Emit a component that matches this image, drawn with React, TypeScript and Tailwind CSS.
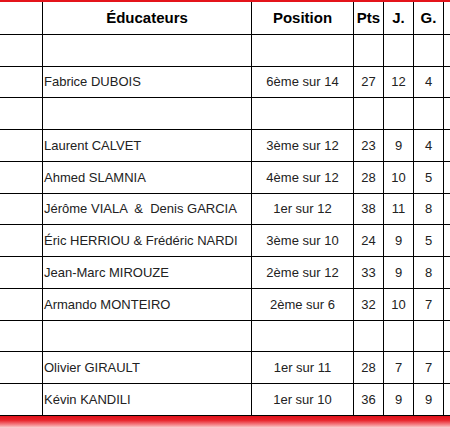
import { FC } from "react";

interface Row {
  name?: string;
  position?: string;
  pts?: string;
  j?: string;
  g?: string;
  h: string;
}

const rows: Row[] = [
  { h: "h-[32px]" },
  { name: "Fabrice DUBOIS", position: "6ème sur 14", pts: "27", j: "12", g: "4", h: "h-[31px]" },
  { h: "h-[32px]" },
  { name: "Laurent CALVET", position: "3ème sur 12", pts: "23", j: "9", g: "4", h: "h-[32px]" },
  { name: "Ahmed SLAMNIA", position: "4ème sur 12", pts: "28", j: "10", g: "5", h: "h-[32px]" },
  { name: "Jérôme VIALA  &  Denis GARCIA", position: "1er sur 12", pts: "38", j: "11", g: "8", h: "h-[31px]" },
  { name: "Éric HERRIOU & Frédéric NARDI", position: "3ème sur 10", pts: "24", j: "9", g: "5", h: "h-[32px]" },
  { name: "Jean-Marc MIROUZE", position: "2ème sur 12", pts: "33", j: "9", g: "8", h: "h-[32px]" },
  { name: "Armando MONTEIRO", position: "2ème sur 6", pts: "32", j: "10", g: "7", h: "h-[32px]" },
  { h: "h-[31px]" },
  { name: "Olivier GIRAULT", position: "1er sur 11", pts: "28", j: "7", g: "7", h: "h-[32px]" },
  { name: "Kévin KANDILI", position: "1er sur 10", pts: "36", j: "9", g: "9", h: "h-[32px]" },
];

const cell = "flex items-center border-r border-black";

const App: FC = () => {
  return (
    <div className="w-[450px] h-[428px] overflow-hidden bg-white font-['Liberation_Sans',Arial,sans-serif] text-[13px] text-[#222]">
      <div className="h-[2px] bg-[#e4141b]" />
      {/* header */}
      <div className="flex h-[33px] border-b border-black text-[15px] font-bold text-black">
        <div className={`${cell} w-[43px] shrink-0`} />
        <div className={`${cell} w-[209px] shrink-0 justify-center`}>Éducateurs</div>
        <div className={`${cell} w-[102px] shrink-0 justify-center`}>Position</div>
        <div className={`${cell} w-[30px] shrink-0 justify-center`}>Pts</div>
        <div className={`${cell} w-[30px] shrink-0 justify-center`}>J.</div>
        <div className={`${cell} w-[30px] shrink-0 justify-center`}>G.</div>
        <div className="flex-1" />
      </div>
      {rows.map((r, i) => (
        <div key={i} className={`flex ${r.h} border-b border-black`}>
          <div className={`${cell} w-[43px] shrink-0`} />
          <div className={`${cell} w-[209px] shrink-0 pl-[1px] whitespace-pre`}>{r.name}</div>
          <div className={`${cell} w-[102px] shrink-0 justify-center`}>{r.position}</div>
          <div className={`${cell} w-[30px] shrink-0 justify-center`}>{r.pts}</div>
          <div className={`${cell} w-[30px] shrink-0 justify-center`}>{r.j}</div>
          <div className={`${cell} w-[30px] shrink-0 justify-center`}>{r.g}</div>
          <div className="flex-1" />
        </div>
      ))}
      <div className="h-[12px] bg-[linear-gradient(to_bottom,#e0121a_0%,#e8242b_35%,#f58a8e_75%,#fcd6d8_100%)]" />
    </div>
  );
};

export default App;
